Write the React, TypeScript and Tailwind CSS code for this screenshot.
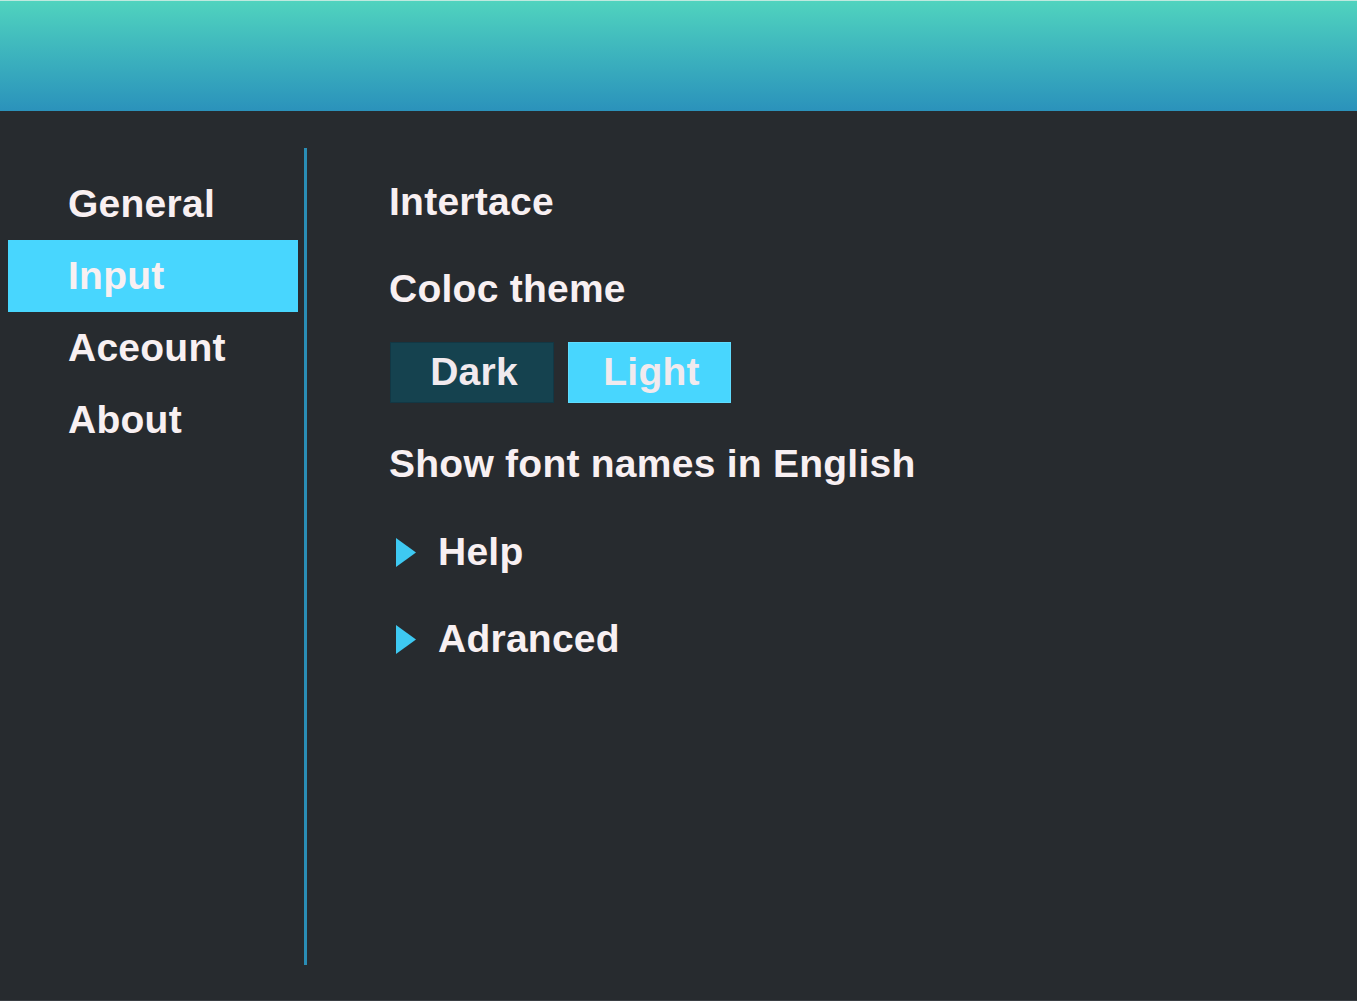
import { ReactNode } from "react";

const NAV = ["General", "Input", "Aceount", "About"];

function Caret() {
  return (
    <svg width="20" height="29" viewBox="0 0 20 29" className="shrink-0">
      <polygon points="0,0 20,14.5 0,29" fill="#3ec9f2" />
    </svg>
  );
}

function Row({ children, className = "" }: { children: ReactNode; className?: string }) {
  return <div className={"flex h-[50px] items-center " + className}>{children}</div>;
}

export default function App() {
  return (
    <div
      className="flex h-[1001px] w-[1357px] flex-col overflow-hidden bg-[#272b2f] text-[39px] font-bold tracking-[0.25px] text-[#f8f0f2]"
      style={{ fontFamily: '"Liberation Sans", Arial, sans-serif' }}
    >
      <header className="h-[111px] shrink-0 border-t border-[#bfe9df] bg-gradient-to-b from-[#50d3be] to-[#2b92bb]" />

      <div className="flex flex-1 border-b border-[#3a3f44]">
        {/* sidebar */}
        <nav className="w-[304px] shrink-0 pt-[57px] pl-2">
          {NAV.map((n) => (
            <div
              key={n}
              className={
                "flex h-[72px] w-[290px] items-center pl-[60px] " +
                (n === "Input" ? "bg-[#48d6fe]" : "")
              }
            >
              {n}
            </div>
          ))}
        </nav>

        <div className="mt-[37px] mb-[35px] w-[3px] shrink-0 bg-[#2a8db5]" />

        {/* content */}
        <main className="flex flex-col pl-[82px] pt-[66px]">
          <Row>Intertace</Row>
          <Row className="mt-[37px]">Coloc theme</Row>
          <div className="mt-[28px] flex gap-[14px] pl-px">
            <button className="h-[61px] w-[164px] border border-[#123744] bg-[#15424f] pl-1 font-bold text-[#f1eaee]">
              Dark
            </button>
            <button className="h-[61px] w-[163px] border border-[#5fdcfe] bg-[#48d6fe] pl-1 font-bold text-[#f1eaee]">
              Light
            </button>
          </div>
          <Row className="mt-[36px]">Show font names in English</Row>
          <Row className="mt-[38px] gap-[22px] pl-[7px]">
            <Caret />
            Help
          </Row>
          <Row className="mt-[37px] gap-[22px] pl-[7px]">
            <Caret />
            Adranced
          </Row>
        </main>
      </div>
    </div>
  );
}
